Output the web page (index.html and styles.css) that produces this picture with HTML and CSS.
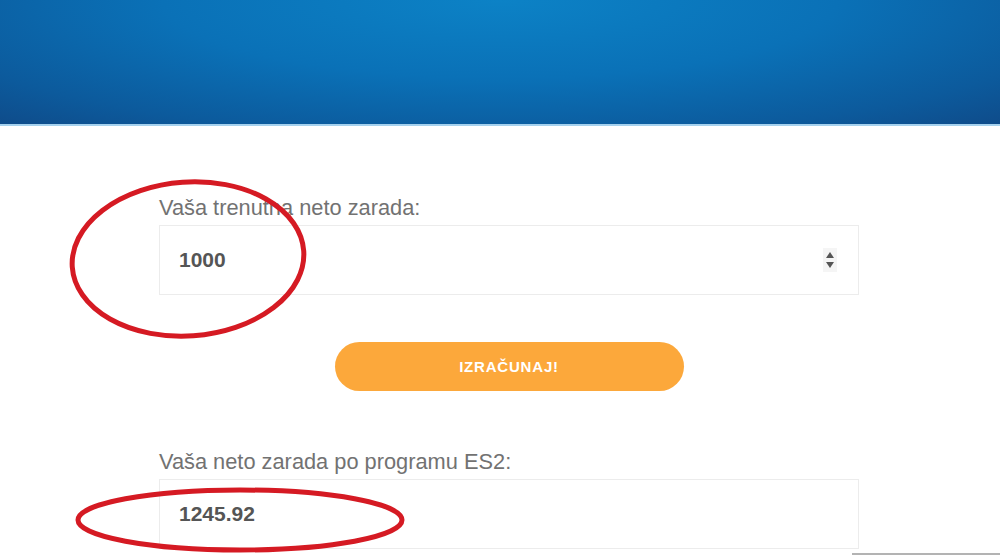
FILE: index.html
```html
<!DOCTYPE html>
<html lang="sr">

<head>
    <meta charset="UTF-8">
    <meta name="viewport" content="width=device-width, initial-scale=1.0">
    <title>Kalkulator zarade ES2</title>
    <link rel="stylesheet" href="styles.css">
</head>

<body>

    <div class="header"></div>

    <div class="content">
        <div class="field">
            <label class="field-label" for="current">Vaša trenutna neto zarada:</label>
            <div class="field-box">
                <span class="field-value" id="current">1000</span>
                <svg class="spinner" width="14" height="24" viewBox="0 0 14 24">
                    <rect x="0" y="0" width="14" height="24" fill="#f5f5f5" />
                    <polygon points="7,4 11,10 3,10" fill="#555" />
                    <polygon points="3,14 11,14 7,20" fill="#555" />
                </svg>
            </div>
        </div>

        <div class="actions">
            <button class="calc-button">IZRAČUNAJ!</button>
        </div>

        <div class="field field-result">
            <label class="field-label" for="result">Vaša neto zarada po programu ES2:</label>
            <div class="field-box">
                <span class="field-value" id="result">1245.92</span>
            </div>
        </div>

        <div class="bottom-line"></div>
    </div>

    <!-- red marker circles drawn over the screenshot -->
    <svg class="marks" width="1000" height="555" viewBox="0 0 1000 555">
        <ellipse cx="188" cy="259" rx="116" ry="77" fill="none" stroke="#d51a23" stroke-width="5" transform="rotate(-4 188 259)" />
        <ellipse cx="240" cy="520" rx="162" ry="30" fill="none" stroke="#d51a23" stroke-width="5" />
    </svg>

</body>

</html>
```

FILE: styles.css
```css
body,
html {
    margin: 0;
    padding: 0;
    height: 100%;
    width: 100%;
    font-family: "Liberation Sans", Arial, sans-serif;
    background-color: #fff;
    overflow: hidden;
}

body {
    position: relative;
}

.header {
    height: 124px;
    background: radial-gradient(ellipse 75% 140% at 50% 0%, #0c82c6 0%, #0a71b7 45%, #0c5a9c 80%, #0f4a88 100%);
    border-bottom: 2px solid #a5d1ee;
}

.content {
    width: 700px;
    padding: 69px 0 0 159px;
}

.field-label {
    display: block;
    font-size: 21.8px;
    line-height: 26px;
    color: #727272;
    margin-bottom: 4px;
}

.field-box {
    height: 68px;
    border: 1px solid #ececec;
    display: flex;
    align-items: center;
    justify-content: space-between;
    padding: 0 21px 0 19px;
}

.field-value {
    font-size: 21px;
    font-weight: bold;
    color: #555;
}

.spinner {
    display: block;
}

.actions {
    display: flex;
    justify-content: center;
    margin-top: 47px;
}

.calc-button {
    width: 349px;
    height: 49px;
    border: none;
    border-radius: 25px;
    background-color: #fca83b;
    color: #fff;
    font-family: "Liberation Sans", Arial, sans-serif;
    font-size: 15px;
    font-weight: bold;
    letter-spacing: 0.8px;
    cursor: pointer;
}

.field-result {
    margin-top: 58px;
}

.bottom-line {
    height: 2px;
    margin: 4px -142px 0 693px;
    background-color: #b3b3b3;
}

.marks {
    position: absolute;
    top: 0;
    left: 0;
    pointer-events: none;
}
```
